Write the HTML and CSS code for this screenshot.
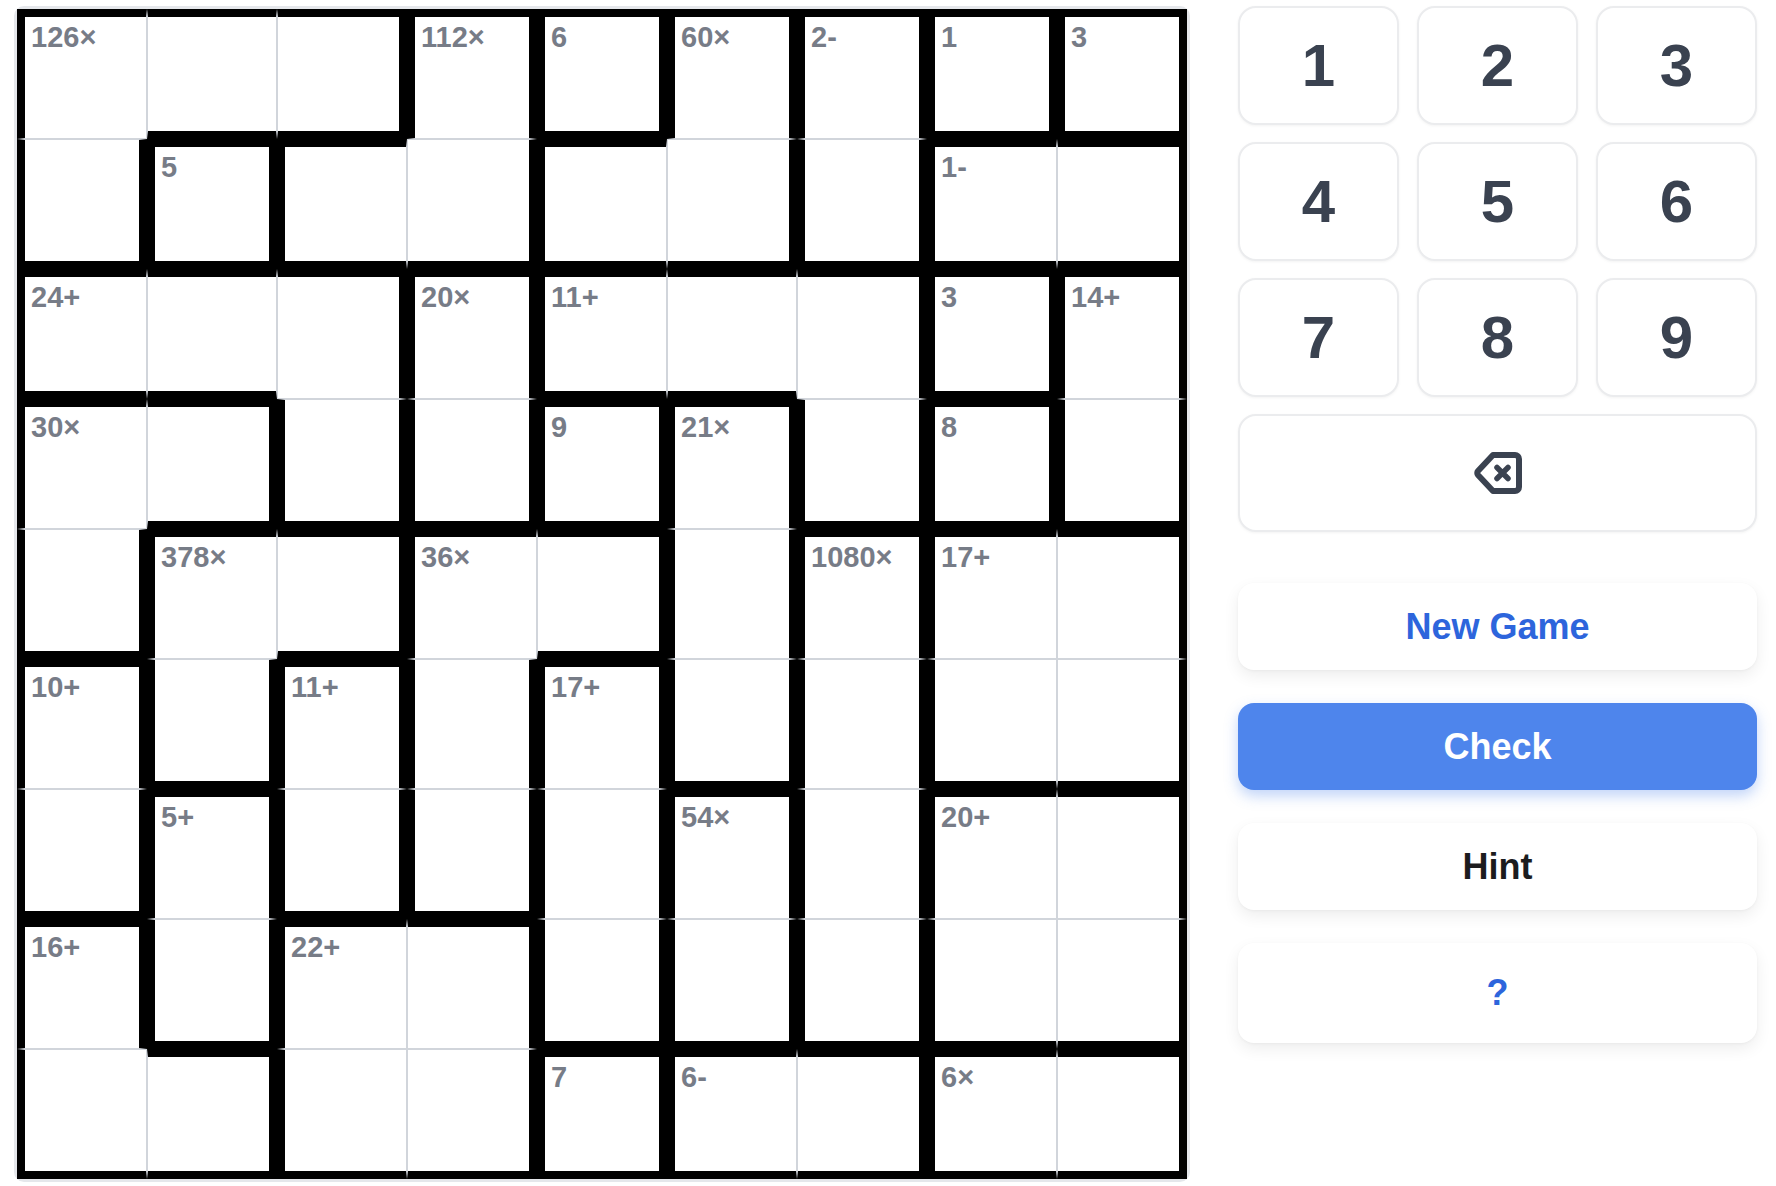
FILE: index.html
```html
<!DOCTYPE html>
<html lang="en">
	<head>
		<meta charset="utf-8" />
		<title>KenKen</title>
		<link rel="stylesheet" href="styles.css">
	</head>
	<body>
		<div class="page">
			<section class="board">
				<div class="grid">
					<!-- row 1 -->
					<div class="cell t l"><span class="label">126×</span></div>
					<div class="cell t b"></div>
					<div class="cell t r b"></div>
					<div class="cell t r l"><span class="label">112×</span></div>
					<div class="cell t r b l"><span class="label">6</span></div>
					<div class="cell t r l"><span class="label">60×</span></div>
					<div class="cell t r l"><span class="label">2-</span></div>
					<div class="cell t r b l"><span class="label">1</span></div>
					<div class="cell t r b l"><span class="label">3</span></div>
					<!-- row 2 -->
					<div class="cell r b l"></div>
					<div class="cell t r b l"><span class="label">5</span></div>
					<div class="cell t b l"></div>
					<div class="cell r b"></div>
					<div class="cell t b l"></div>
					<div class="cell r b"></div>
					<div class="cell r b l"></div>
					<div class="cell t b l"><span class="label">1-</span></div>
					<div class="cell t r b"></div>
					<!-- row 3 -->
					<div class="cell t b l"><span class="label">24+</span></div>
					<div class="cell t b"></div>
					<div class="cell t r"></div>
					<div class="cell t r l"><span class="label">20×</span></div>
					<div class="cell t b l"><span class="label">11+</span></div>
					<div class="cell t b"></div>
					<div class="cell t r"></div>
					<div class="cell t r b l"><span class="label">3</span></div>
					<div class="cell t r l"><span class="label">14+</span></div>
					<!-- row 4 -->
					<div class="cell t l"><span class="label">30×</span></div>
					<div class="cell t r b"></div>
					<div class="cell r b l"></div>
					<div class="cell r b l"></div>
					<div class="cell t r b l"><span class="label">9</span></div>
					<div class="cell t r l"><span class="label">21×</span></div>
					<div class="cell r b l"></div>
					<div class="cell t r b l"><span class="label">8</span></div>
					<div class="cell r b l"></div>
					<!-- row 5 -->
					<div class="cell r b l"></div>
					<div class="cell t l"><span class="label">378×</span></div>
					<div class="cell t r b"></div>
					<div class="cell t l"><span class="label">36×</span></div>
					<div class="cell t r b"></div>
					<div class="cell r l"></div>
					<div class="cell t r l"><span class="label">1080×</span></div>
					<div class="cell t l"><span class="label">17+</span></div>
					<div class="cell t r"></div>
					<!-- row 6 -->
					<div class="cell t r l"><span class="label">10+</span></div>
					<div class="cell r b l"></div>
					<div class="cell t r l"><span class="label">11+</span></div>
					<div class="cell r l"></div>
					<div class="cell t r l"><span class="label">17+</span></div>
					<div class="cell r b l"></div>
					<div class="cell r l"></div>
					<div class="cell b l"></div>
					<div class="cell r b"></div>
					<!-- row 7 -->
					<div class="cell r b l"></div>
					<div class="cell t r l"><span class="label">5+</span></div>
					<div class="cell r b l"></div>
					<div class="cell r b l"></div>
					<div class="cell r l"></div>
					<div class="cell t r l"><span class="label">54×</span></div>
					<div class="cell r l"></div>
					<div class="cell t l"><span class="label">20+</span></div>
					<div class="cell t r"></div>
					<!-- row 8 -->
					<div class="cell t r l"><span class="label">16+</span></div>
					<div class="cell r b l"></div>
					<div class="cell t l"><span class="label">22+</span></div>
					<div class="cell t r"></div>
					<div class="cell r b l"></div>
					<div class="cell r b l"></div>
					<div class="cell r b l"></div>
					<div class="cell b l"></div>
					<div class="cell r b"></div>
					<!-- row 9 -->
					<div class="cell b l"></div>
					<div class="cell t r b"></div>
					<div class="cell b l"></div>
					<div class="cell r b"></div>
					<div class="cell t r b l"><span class="label">7</span></div>
					<div class="cell t b l"><span class="label">6-</span></div>
					<div class="cell t r b"></div>
					<div class="cell t b l"><span class="label">6×</span></div>
					<div class="cell t r b"></div>
				</div>
			</section>
			<aside class="side">
				<div class="pad">
					<button class="key">1</button>
					<button class="key">2</button>
					<button class="key">3</button>
					<button class="key">4</button>
					<button class="key">5</button>
					<button class="key">6</button>
					<button class="key">7</button>
					<button class="key">8</button>
					<button class="key">9</button>
					<button class="key wide" aria-label="Erase">
						<svg width="50" height="44" viewBox="0 0 50 44">
							<path d="M20 4H42a4 4 0 0 1 4 4V36a4 4 0 0 1-4 4H20L5 24a3 3 0 0 1 0-4Z" fill="none" stroke="currentColor" stroke-width="6" stroke-linejoin="round"/>
							<path d="M24 16.5l11 11M35 16.5l-11 11" fill="none" stroke="currentColor" stroke-width="5.5" stroke-linecap="round"/>
						</svg>
					</button>
				</div>
				<div class="actions">
					<button class="act new">New Game</button>
					<button class="act check">Check</button>
					<button class="act hint">Hint</button>
					<button class="act help">?</button>
				</div>
			</aside>
		</div>
	</body>
</html>
```

FILE: styles.css
```css
body {
	margin: 0;
	background: #fff;
	font-family: "Liberation Sans", Arial, sans-serif;
}
.page {
	display: flex;
	align-items: flex-start;
	gap: 48px;
	padding: 6px 0 0 14px;
}
.board {
	border: 3px solid #e5e7eb;
	border-radius: 10px;
}
.grid {
	display: grid;
	grid-template-columns: repeat(9, 130px);
	grid-template-rows: repeat(9, 130px);
}
.cell {
	box-sizing: border-box;
	border: 1px solid #d1d5db;
	background: #fff;
	padding: 6px 0 0 6px;
}
.cell.t { border-top: 8px solid #000; }
.cell.r { border-right: 8px solid #000; }
.cell.b { border-bottom: 8px solid #000; }
.cell.l { border-left: 8px solid #000; }
.label {
	display: block;
	font-size: 29px;
	line-height: 1;
	font-weight: bold;
	color: #777c87;
}
.side {
	width: 519px;
	display: flex;
	flex-direction: column;
}
.pad {
	display: grid;
	grid-template-columns: repeat(3, 1fr);
	column-gap: 18px;
	row-gap: 17px;
}
.key {
	height: 119px;
	background: #fff;
	border: 2px solid #ebecee;
	border-radius: 18px;
	box-shadow: 0 1px 3px rgba(0, 0, 0, 0.05);
	font-family: "Liberation Sans", Arial, sans-serif;
	font-size: 60px;
	font-weight: bold;
	color: #3a4250;
	display: flex;
	align-items: center;
	justify-content: center;
	padding: 0;
}
.key.wide {
	grid-column: span 3;
	height: 118px;
}
.actions {
	margin-top: 51px;
	display: flex;
	flex-direction: column;
	gap: 33px;
}
.act {
	height: 87px;
	border: 0;
	border-radius: 16px;
	background: #fff;
	box-shadow: 0 6px 16px rgba(0, 0, 0, 0.07), 0 1px 3px rgba(0, 0, 0, 0.04);
	font-family: "Liberation Sans", Arial, sans-serif;
	font-size: 36px;
	font-weight: bold;
	padding: 0;
}
.act.new { color: #2d65dc; }
.act.check {
	background: #4e85ec;
	color: #fff;
	box-shadow: 0 6px 14px rgba(78, 133, 236, 0.35);
}
.act.hint { color: #1c1c1e; }
.act.help {
	height: 100px;
	color: #2d65dc;
}
```
